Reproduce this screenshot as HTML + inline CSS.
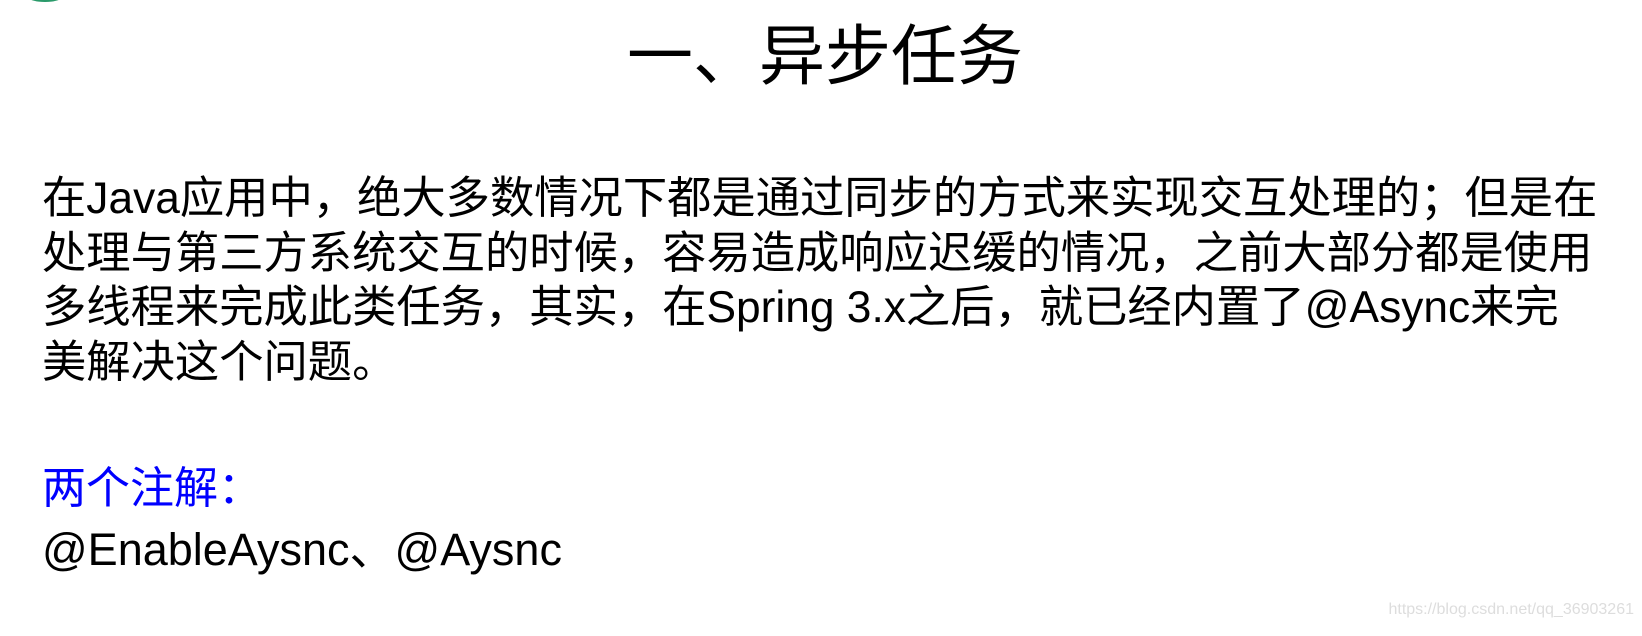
<!DOCTYPE html>
<html><head><meta charset="utf-8"><style>
body{margin:0;width:1642px;height:636px;background:#fff;position:relative;overflow:hidden;font-family:"Liberation Sans","Noto Sans CJK SC",sans-serif;color:#000}
.a{position:absolute;white-space:nowrap}
#t{left:0;width:1642px;text-align:center;top:16px;font-size:66px;line-height:80px;padding-left:8px;box-sizing:border-box}
#p{left:42px;top:172px;font-size:44.3px;line-height:54.5px}
#h{left:42px;top:462px;font-size:44px;line-height:54px;color:#0000ff}
#c{left:42px;top:523px;font-size:45px;line-height:54px}
#w{right:8px;top:601px;font-size:16px;color:#ddd}
#g{left:28px;top:-8px;width:34px;height:10px;border-radius:50%;background:#2a9a6a}
</style></head><body>
<div class="a" id="g"></div>
<div class="a" id="t">一、异步任务</div>
<div class="a" id="p">在Java应用中，绝大多数情况下都是通过同步的方式来实现交互处理的；但是在<br>处理与第三方系统交互的时候，容易造成响应迟缓的情况，之前大部分都是使用<br>多线程来完成此类任务，其实，在Spring 3.x之后，就已经内置了@Async来完<br>美解决这个问题。</div>
<div class="a" id="h">两个注解：</div>
<div class="a" id="c">@EnableAysnc、@Aysnc</div>
<div class="a" id="w">https://blog.csdn.net/qq_36903261</div>
</body></html>
